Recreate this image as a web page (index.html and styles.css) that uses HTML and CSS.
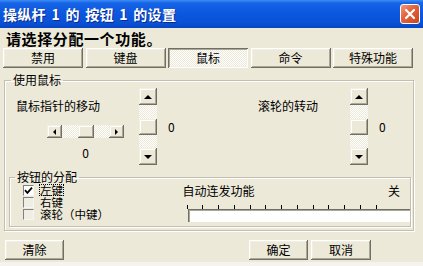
FILE: index.html
```html
<!DOCTYPE html>
<html lang="zh-CN">
<head>
<meta charset="utf-8">
<link rel="stylesheet" href="styles.css">
</head>
<body>
<div class="window">
  <div class="titlebar">
    <span class="title">操纵杆 1 的 按钮 1 的设置</span>
    <span class="close"><svg width="12" height="12" viewBox="0 0 12 12"><path d="M2 2L10 10M10 2L2 10" stroke="#fff" stroke-width="2.2" stroke-linecap="round"/></svg></span>
  </div>
  <div class="prompt">请选择分配一个功能。</div>
  <div class="tabs">
    <div class="btn tab">禁用</div>
    <div class="btn tab">键盘</div>
    <div class="btn tab pressed">鼠标</div>
    <div class="btn tab">命令</div>
    <div class="btn tab">特殊功能</div>
  </div>
  <fieldset class="group outer">
    <legend>使用鼠标</legend>
    <div class="mouse-row">
      <div class="pane pane-left">
        <div class="col">
          <div class="label">鼠标指针的移动</div>
          <div class="hscroll">
            <div class="sb-btn h"><span class="arr left"></span></div>
            <div class="h-track"><div class="sb-thumb h"></div></div>
            <div class="sb-btn h"><span class="arr right"></span></div>
          </div>
          <div class="val">0</div>
        </div>
        <div class="vscroll">
          <div class="sb-btn v"><span class="arr up"></span></div>
          <div class="v-track"><div class="sb-thumb v"></div></div>
          <div class="sb-btn v"><span class="arr down"></span></div>
        </div>
        <div class="vval">0</div>
      </div>
      <div class="pane pane-right">
        <div class="label wheel-label">滚轮的转动</div>
        <div class="vscroll">
          <div class="sb-btn v"><span class="arr up"></span></div>
          <div class="v-track"><div class="sb-thumb v"></div></div>
          <div class="sb-btn v"><span class="arr down"></span></div>
        </div>
        <div class="vval">0</div>
      </div>
    </div>
    <fieldset class="group inner">
      <legend>按钮的分配</legend>
      <div class="assign">
        <div class="checks">
          <div class="check-row"><span class="cb checked"><svg width="9" height="9" viewBox="0 0 9 9"><path d="M1 4.2L3.4 6.8L8 1.6" fill="none" stroke="#000" stroke-width="1.8"/></svg></span><span class="cb-label focus">左键</span></div>
          <div class="check-row"><span class="cb"></span><span class="cb-label">右键</span></div>
          <div class="check-row"><span class="cb"></span><span class="cb-label">滚轮（中键）</span></div>
        </div>
        <div class="auto">
          <div class="auto-head"><span>自动连发功能</span><span class="off">关</span></div>
          <div class="ticks">
            <i></i><i></i><i></i><i></i><i></i><i></i><i></i><i></i><i></i><i></i><i></i><i></i><i></i>
          </div>
          <div class="track"></div>
        </div>
      </div>
    </fieldset>
  </fieldset>
  <div class="footer">
    <div class="btn foot clear">清除</div>
    <div class="btn foot ok">确定</div>
    <div class="btn foot cancel">取消</div>
  </div>
</div>
</body>
</html>
```

FILE: styles.css
```css
* { box-sizing: border-box; }
html, body { margin: 0; padding: 0; }
body {
  width: 423px;
  height: 266px;
  overflow: hidden;
  background: #f4f3ee;
  font-family: "Noto Sans CJK SC", "Liberation Sans", sans-serif;
  font-size: 12px;
  color: #000;
}
.window {
  height: 262px;
  background: #ece9d8;
  display: flex;
  flex-direction: column;
}
.titlebar {
  height: 28px;
  display: flex;
  align-items: center;
  padding: 0 3px 0 3px;
  background: linear-gradient(#3d8ef5 0, #1763e6 3px, #0c58df 45%, #0a50d4 85%, #0846c2 100%);
}
.title {
  color: #fff;
  font-weight: bold;
  font-size: 14px;
  line-height: 16px;
  word-spacing: 2px;
  letter-spacing: 0.3px;
  text-shadow: 1px 1px 0 #0a2a8c;
}
.close {
  margin-left: auto;
  width: 20px;
  height: 20px;
  border: 1px solid #fff;
  border-radius: 3px;
  background: linear-gradient(135deg, #f09a7c 0, #e2653f 40%, #c9441f 100%);
  display: flex;
  align-items: center;
  justify-content: center;
}
.prompt {
  height: 20px;
  padding: 2px 0 0 6px;
  font-size: 15px;
  line-height: 17px;
  font-weight: bold;
  letter-spacing: 0.6px;
}
.tabs {
  display: flex;
  gap: 2.5px;
  padding-left: 3px;
  height: 20px;
}
.btn {
  background: #ece9d8;
  box-shadow: inset -1px -1px #716f64, inset 1px 1px #fff, inset -2px -2px #aca899, inset 2px 2px #f1efe2;
  display: flex;
  align-items: center;
  justify-content: center;
  line-height: 14px;
}
.tab { width: 80px; height: 20px; }
.tab.pressed {
  background: repeating-conic-gradient(#fff 0 25%, #ece9d8 0 50%) 0 0 / 2px 2px;
  box-shadow: inset 1px 1px #716f64, inset -1px -1px #fff, inset 2px 2px #aca899, inset -2px -2px #f1efe2;
}
.group {
  margin: 0;
  padding: 0;
  min-inline-size: 0;
  border: 1px solid #c2bfb0;
  box-shadow: inset 1px 1px #fff, 1px 1px #fff;
}
.group legend {
  padding: 0 2px;
  line-height: 14px;
  font-size: 12px;
}
.outer {
  margin: 5px 0 0 4px;
  width: 410px;
  padding-bottom: 3px;
}
.outer > legend { margin-left: 6px; }
.mouse-row {
  display: flex;
  height: 83px;
}
.pane { display: flex; }
.pane-left { width: 205px; }
.col {
  width: 134px;
  padding: 12px 0 0 11px;
}
.label { line-height: 14px; white-space: nowrap; }
.hscroll {
  display: flex;
  margin: 12px 0 0 31px;
  width: 77px;
  height: 13px;
}
.h-track {
  flex: 1;
  display: flex;
  justify-content: center;
  background: repeating-conic-gradient(#fff 0 25%, #ece9d8 0 50%) 0 0 / 2px 2px;
}
.sb-btn {
  background: #ece9d8;
  box-shadow: inset -1px -1px #716f64, inset 1px 1px #f1efe2, inset -2px -2px #aca899, inset 2px 2px #fff;
  display: flex;
  align-items: center;
  justify-content: center;
  flex: none;
}
.sb-btn.h { width: 15px; height: 13px; }
.sb-btn.v { width: 18px; height: 17px; }
.sb-thumb {
  background: #ece9d8;
  box-shadow: inset -1px -1px #716f64, inset 1px 1px #f1efe2, inset -2px -2px #aca899, inset 2px 2px #fff;
}
.sb-thumb.h { width: 16px; height: 13px; }
.sb-thumb.v { width: 18px; height: 16px; }
.arr { width: 0; height: 0; border: 3px solid transparent; }
.arr.left { border-right: 3px solid #000; border-left-width: 0; }
.arr.right { border-left: 3px solid #000; border-right-width: 0; }
.arr.up { border-bottom: 4px solid #000; border-top-width: 0; border-left-width: 4px; border-right-width: 4px; }
.arr.down { border-top: 4px solid #000; border-bottom-width: 0; border-left-width: 4px; border-right-width: 4px; }
.val {
  margin: 8px 0 0 31px;
  width: 77px;
  text-align: center;
  line-height: 14px;
}
.vscroll {
  display: flex;
  flex-direction: column;
  width: 18px;
  height: 77px;
  margin-top: 1px;
}
.v-track {
  flex: 1;
  display: flex;
  align-items: center;
  background: repeating-conic-gradient(#fff 0 25%, #ece9d8 0 50%) 0 0 / 2px 2px;
}
.vval {
  margin: 33px 0 0 11px;
  line-height: 14px;
}
.pane-right { width: 200px; }
.wheel-label {
  margin: 12px 0 0 48px;
  width: 92px;
}
.inner {
  margin: 0 0 0 4px;
  width: 402px;
  padding: 0 0 4px 0;
}
.inner > legend { margin-left: 5px; }
.assign {
  display: flex;
  height: 38px;
}
.checks {
  width: 173px;
  padding-left: 13px;
}
.check-row {
  display: flex;
  align-items: center;
  height: 12px;
  line-height: 12px;
}
.cb {
  width: 11px;
  height: 11px;
  border-top: 1px solid #808080;
  border-left: 1px solid #808080;
  border-right: 1px solid #f7f6f0;
  border-bottom: 1px solid #f7f6f0;
  background: #f0eee4;
  display: flex;
  align-items: center;
  justify-content: center;
  flex: none;
}
.cb.checked { background: #fff; }
.cb-label { margin-left: 5px; padding: 0 1px; white-space: nowrap; font-size: 11.5px; line-height: 12px; }
.cb-label.focus { outline: 1px dotted #000; outline-offset: -1px; }
.auto {
  width: 228px;
  display: flex;
  flex-direction: column;
}
.auto-head {
  display: flex;
  justify-content: space-between;
  line-height: 14px;
  padding-right: 10px;
}
.ticks {
  display: flex;
  justify-content: space-between;
  width: 190px;
  margin: 7px 0 0 4px;
  height: 4px;
}
.ticks i {
  display: block;
  width: 1px;
  height: 4px;
  background: #000;
}
.track {
  margin-left: 5px;
  width: 222px;
  height: 13px;
  background: #fff;
  border-top: 1px solid #716f64;
  border-left: 1px solid #716f64;
  box-shadow: inset 1px 1px #aca899;
}
.footer {
  display: flex;
  margin-top: 9px;
  height: 20px;
}
.foot { height: 20px; }
.clear { width: 59px; margin-left: 5px; }
.ok { width: 59px; margin-left: 185px; }
.cancel { width: 60px; margin-left: 3px; }
```
